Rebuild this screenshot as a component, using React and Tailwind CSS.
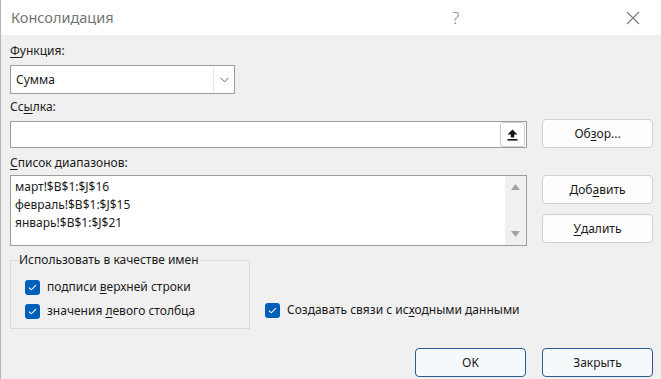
import React from "react";

const font = { fontFamily: '"Noto Sans", "Liberation Sans", sans-serif' };

function U({ children }) {
  return <span className="underline underline-offset-[2px]">{children}</span>;
}

function Check({ children }) {
  return (
    <div className="flex items-center gap-[7px] h-[16px]">
      <div className="w-[15px] h-[15px] rounded-[3px] bg-[#005fb8] flex items-center justify-center">
        <svg width="9" height="7" viewBox="0 0 9 7">
          <path d="M1 3.6 L3.3 5.8 L8 1.2" stroke="white" strokeWidth="1.1" fill="none" />
        </svg>
      </div>
      <span className="text-[12px] leading-[16px] text-[#1a1a1a]">{children}</span>
    </div>
  );
}

function Btn({ children, primary }) {
  return (
    <div
      className={
        "w-[111px] h-[29px] rounded-[4px] flex items-center justify-center text-[12px] text-[#1a1a1a] " +
        (primary ? "border border-[#2b5b8e] bg-[#f6f9fc]" : "border border-[#d0d0d0] bg-[#fdfdfd]")
      }
    >
      {children}
    </div>
  );
}

export default function App() {
  return (
    <div className="w-[661px] h-[379px] bg-[#f0f0f0] border-l border-[#b5b5b5] overflow-hidden" style={font}>
      <div className="h-[35px] bg-white flex items-center">
        <span className="pl-[10px] text-[14.5px] text-[#737373] flex-1">Консолидация</span>
        <span className="text-[16px] text-[#808080] w-[20px] mr-[160px] text-center font-light">?</span>
        <svg width="14" height="14" viewBox="0 0 14 14" className="mr-[21px]">
          <path d="M1 1 L13 13 M13 1 L1 13" stroke="#7a7a7a" strokeWidth="1.1" />
        </svg>
      </div>
      <div className="pl-[9px] pt-[8px] text-[12px] text-[#1a1a1a]">
        <div className="h-[16px] leading-[16px]"><U>Ф</U>ункция:</div>
        <div className="mt-[6px] w-[225px] h-[29px] border border-[#9c9c9c] bg-white flex">
          <div className="flex-1 flex items-center pl-[5px]">Сумма</div>
          <div className="w-[21px] border-l border-[#e6e6e6] flex items-center justify-center">
            <svg width="9" height="6" viewBox="0 0 9 6">
              <path d="M0.5 0.8 L4.5 4.8 L8.5 0.8" stroke="#666" strokeWidth="1" fill="none" />
            </svg>
          </div>
        </div>
        <div className="mt-[5px] h-[16px] leading-[16px]">Сс<U>ы</U>лка:</div>
        <div className="mt-[4px] flex gap-[15px] items-start">
          <div className="mt-[2px] w-[517px] h-[27px] border border-[#9c9c9c] bg-white flex justify-end items-center pr-[1px]">
            <div className="w-[25px] h-[25px] rounded-[3px] border border-[#cfcfcf] bg-[#fdfdfd] flex items-center justify-center">
              <svg width="11" height="12" viewBox="0 0 11 12">
                <path d="M5.5 0.5 L10.5 5.5 L7.2 5.5 L7.2 8.5 L3.8 8.5 L3.8 5.5 L0.5 5.5 Z" fill="#111" />
                <rect x="0.5" y="10" width="10" height="1.6" fill="#111" />
              </svg>
            </div>
          </div>
          <Btn>Об<U>з</U>ор...</Btn>
        </div>
        <div className="mt-[7px] h-[16px] leading-[16px]"><U>С</U>писок диапазонов:</div>
        <div className="mt-[4px] flex gap-[15px] items-start">
          <div className="w-[517px] h-[71px] border border-[#9c9c9c] bg-white flex">
            <div className="flex-1 pl-[4px] pt-[2px] leading-[18px]">
              <div>март!$B$1:$J$16</div>
              <div>февраль!$B$1:$J$15</div>
              <div>январь!$B$1:$J$21</div>
            </div>
            <div className="w-[21px] bg-[#f0f0f0] flex flex-col items-center justify-between py-[8px]">
              <svg width="9" height="6" viewBox="0 0 9 6"><path d="M4.5 0 L9 6 L0 6 Z" fill="#a3a3a3" /></svg>
              <svg width="9" height="6" viewBox="0 0 9 6"><path d="M0 0 L9 0 L4.5 6 Z" fill="#a3a3a3" /></svg>
            </div>
          </div>
          <div className="flex flex-col gap-[10px]">
            <Btn>Доб<U>а</U>вить</Btn>
            <Btn><U>У</U>далить</Btn>
          </div>
        </div>
        <div className="mt-[6px] flex items-end">
          <fieldset className="w-[240px] h-[77px] border border-[#dcdcdc] px-[8px]">
            <legend className="pr-[2px] leading-[16px]">Использовать в качестве имен</legend>
            <div className="pl-[6px] pt-[11px] flex flex-col gap-[8px]">
              <Check>подписи <U>в</U>ерхней строки</Check>
              <Check>значения <U>л</U>евого столбца</Check>
            </div>
          </fieldset>
          <div className="ml-[15px] mb-[11px]">
            <Check>Создавать связи с ис<U>х</U>одными данными</Check>
          </div>
        </div>
        <div className="mt-[19px] flex justify-end gap-[16px] pr-[8px]">
          <Btn primary>OK</Btn>
          <Btn primary>Закрыть</Btn>
        </div>
      </div>
    </div>
  );
}
